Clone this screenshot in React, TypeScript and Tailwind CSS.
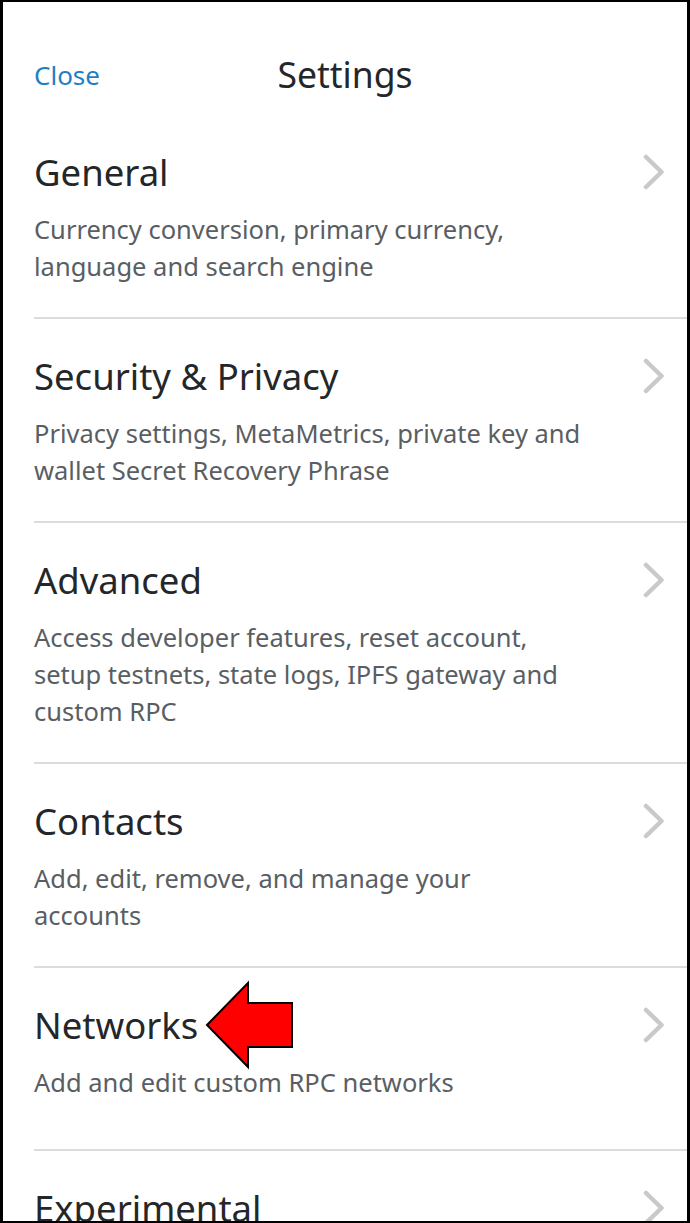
import type { ReactNode } from "react"

type Item = {
  title: string
  desc: ReactNode
  pb?: string
}

const items: Item[] = [
  {
    title: "General",
    desc: (
      <>
        Currency conversion, primary currency,
        <br />
        language and search engine
      </>
    ),
  },
  {
    title: "Security & Privacy",
    desc: (
      <>
        Privacy settings, MetaMetrics, private key and
        <br />
        wallet Secret Recovery Phrase
      </>
    ),
  },
  {
    title: "Advanced",
    desc: (
      <>
        Access developer features, reset account,
        <br />
        setup testnets, state logs, IPFS gateway and
        <br />
        custom RPC
      </>
    ),
  },
  {
    title: "Contacts",
    desc: (
      <>
        Add, edit, remove, and manage your
        <br />
        accounts
      </>
    ),
  },
  {
    title: "Networks",
    desc: "Add and edit custom RPC networks",
    pb: "pb-[48px]",
  },
  {
    title: "Experimental",
    desc: "",
  },
]

function Chevron() {
  return (
    <svg width="22" height="36" viewBox="0 0 22 36" fill="none" className="shrink-0">
      <polyline
        points="3,3 18.5,18 3,33"
        stroke="#c9c9c9"
        strokeWidth="4.5"
        strokeLinecap="round"
        strokeLinejoin="round"
      />
    </svg>
  )
}

export default function App() {
  return (
    <div className="relative w-[690px] h-[1223px] overflow-hidden bg-white border-x-[3px] border-y-[2px] border-black font-['Noto_Sans','Liberation_Sans',sans-serif]">
      {/* Header */}
      <div className="h-[113px] pt-[53px]">
        <div className="grid grid-cols-[1fr_auto_1fr] items-center h-[40px] px-[31px]">
          <span className="text-[26px] text-[#1f7fc4] leading-none">Close</span>
          <span className="text-[35.5px] text-[#24272a] leading-none">Settings</span>
          <span />
        </div>
      </div>

      {/* Rows */}
      <div className="flex flex-col">
        {items.map((it) => (
          <div
            key={it.title}
            className={`ml-[31px] pr-[22px] pt-[35px] border-b-2 border-[#dcdcdc] ${it.pb ?? "pb-[32px]"}`}
          >
            <div className="flex items-center justify-between h-[44px]">
              <span className="text-[36.5px] leading-[44px] text-[#24272a]">{it.title}</span>
              <Chevron />
            </div>
            {it.desc && (
              <p className="mt-[17px] text-[25.5px] leading-[37px] text-[#595e63]">{it.desc}</p>
            )}
          </div>
        ))}
      </div>

      {/* Annotation arrow */}
      <svg
        width="92"
        height="90"
        viewBox="0 0 92 90"
        className="absolute left-[201px] top-[978px]"
      >
        <polygon
          points="3,45 44,3 44,23 88,23 88,67 44,67 44,87"
          fill="#ff0000"
          stroke="#000"
          strokeWidth="2"
          strokeLinejoin="miter"
        />
      </svg>
    </div>
  )
}
